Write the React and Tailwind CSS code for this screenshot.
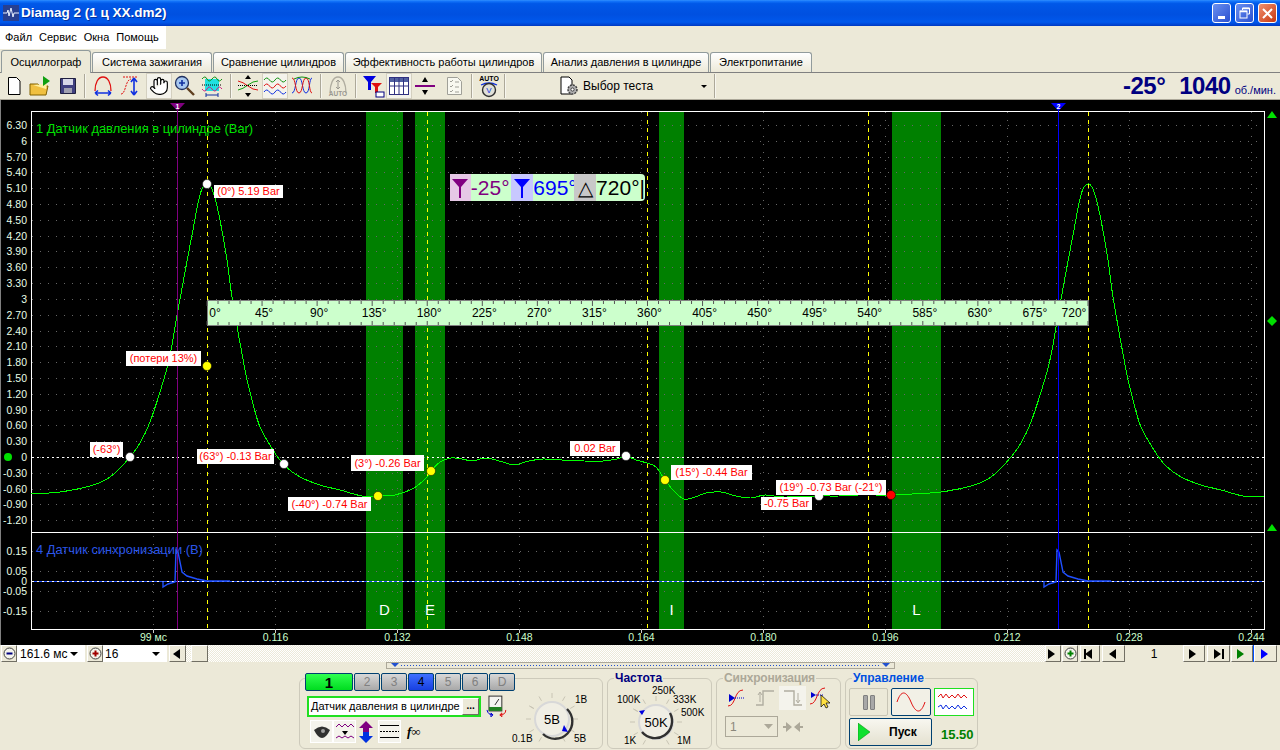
import { Hand } from 'lucide-react';

const raised = 'bg-[#ece9d8] border border-t-white border-l-white border-r-[#716f64] border-b-[#716f64]';

const tabs = [
  { label: 'Система зажигания', width: 'w-[120px]' },
  { label: 'Сравнение цилиндров', width: 'w-[131px]' },
  { label: 'Эффективность работы цилиндров', width: 'w-[197px]' },
  { label: 'Анализ давления в цилиндре', width: 'w-[166px]' },
  { label: 'Электропитание', width: 'w-[102px]' },
];

const axisTop = ['6.30', '6', '5.70', '5.40', '5.10', '4.80', '4.50', '4.20', '3.90', '3.60', '3.30', '3', '2.70', '2.40', '2.10', '1.80', '1.50', '1.20', '0.90', '0.60', '0.30', '0', '-0.30', '-0.60', '-0.90', '-1.20'];
const axisSync = [['0.15', 551], ['0.05', 571], ['0', 581], ['-0.05', 591], ['-0.15', 611]];
const times = ['99 мс', '0.116', '0.132', '0.148', '0.164', '0.180', '0.196', '0.212', '0.228', '0.244'];

const peak = [[31, 494], [60, 492], [90, 486], [107, 479], [118, 470], [130, 457], [140, 443], [150, 422], [160, 392], [167, 368], [172, 345], [178, 310], [185, 272], [192, 235], [198, 203], [202, 189], [207, 184], [211, 187], [215, 198], [220, 220], [227, 260], [232, 297], [245, 370], [252, 400], [260, 427], [273, 450], [284, 465], [300, 477], [320, 485], [340, 490], [362, 496]];
const middle = [[378, 496], [395, 495], [414, 488], [427, 477], [431, 471], [440, 462], [451, 458], [462, 459], [473, 461], [486, 458], [503, 462], [514, 465], [529, 461], [543, 459], [562, 460], [584, 461], [603, 461], [617, 459], [626, 456], [636, 460], [647, 463], [656, 467], [665, 480], [673, 490], [684, 499], [695, 497], [706, 493], [721, 492], [736, 496], [751, 498], [765, 495], [784, 497], [819, 496], [839, 496], [858, 495], [891, 495]];
const greenPoints = [...peak, ...middle, ...peak.map(([x, y]) => [x + 881, y]), [1264, 497]];

// catmull-rom through the read-off points so the trace doesn't look kinked
function smooth(pts) {
  let d = `M${pts[0][0]} ${pts[0][1]}`;
  for (let i = 0; i < pts.length - 1; i++) {
    const a = pts[Math.max(i - 1, 0)];
    const b = pts[i];
    const c = pts[i + 1];
    const e = pts[Math.min(i + 2, pts.length - 1)];
    const c1 = [b[0] + (c[0] - a[0]) / 6, b[1] + (c[1] - a[1]) / 6];
    const c2 = [c[0] - (e[0] - b[0]) / 6, c[1] - (e[1] - b[1]) / 6];
    d += `C${c1[0].toFixed(1)} ${c1[1].toFixed(1)} ${c2[0].toFixed(1)} ${c2[1].toFixed(1)} ${c[0]} ${c[1]}`;
  }
  return d;
}
const greenTrace = smooth(greenPoints);

const pulse = [[163, 581], [163, 587], [168, 584], [175, 582], [176, 550], [178, 552], [182, 572], [187, 576], [197, 579], [207, 581], [230, 581]];
const pulseA = pulse.map(p => p.join(',')).join(' ');
const pulseB = pulse.map(([x, y]) => `${x + 881},${y}`).join(' ');

const bands = [
  { x: 366, w: 37, label: 'D' },
  { x: 415, w: 30, label: 'E' },
  { x: 659, w: 25, label: 'I' },
  { x: 892, w: 49, label: 'L' },
];

const markers = [
  [207, 184, '#ffffff'], [207, 366, '#ffff00'], [130, 457, '#ffffff'], [284, 464, '#ffffff'], [378, 496, '#ffff00'],
  [431, 471, '#ffff00'], [626, 456, '#ffffff'], [665, 480, '#ffff00'], [819, 496, '#ffffff'], [891, 495, '#ff0000'],
];

const notes = [
  { text: '(0°) 5.19 Bar', x: 214, y: 185, w: 69, h: 13 },
  { text: '(потери 13%)', x: 126, y: 351, w: 75, h: 15 },
  { text: '(-63°)', x: 90, y: 442, w: 33, h: 15 },
  { text: '(63°) -0.13 Bar', x: 197, y: 449, w: 77, h: 15 },
  { text: '(-40°) -0.74 Bar', x: 288, y: 497, w: 83, h: 14 },
  { text: '(3°) -0.26 Bar', x: 351, y: 455, w: 73, h: 16 },
  { text: '0.02 Bar', x: 570, y: 441, w: 50, h: 15 },
  { text: '(15°) -0.44 Bar', x: 671, y: 465, w: 81, h: 15 },
  { text: '(19°) -0.73 Bar (-21°)', x: 776, y: 480, w: 110, h: 15 },
  { text: '-0.75 Bar', x: 761, y: 497, w: 51, h: 13 },
];

const rulerTicks = Array.from({ length: 81 }, (_, i) => i * 9);
const rulerLabels = Array.from({ length: 17 }, (_, i) => i * 45);
const degX = d => 207 + d * 1.2236;

function Funnel({ color }) {
  return (
    <svg width="16" height="22" viewBox="0 0 16 22">
      <path d="M0 2h16l-7 8v11h-2v-11z" fill={color} />
    </svg>
  );
}

function Scope() {
  return (
    <div className="relative h-[545px] bg-black border-l border-[#808080]">
      <svg className="absolute left-[-1px] top-0" width="1280" height="545" viewBox="0 100 1280 545">
        {bands.map(b => (
          <rect key={b.label} x={b.x} y="112" width={b.w} height="517" fill="#008000" />
        ))}
        <g stroke="#666" strokeDasharray="1 7" shapeRendering="crispEdges">
          {axisTop.map((_, i) => (
            <line key={i} x1="32" x2="1264" y1={Math.round(125 + i * 15.81)} y2={Math.round(125 + i * 15.81)} />
          ))}
          {[551, 571, 591, 611].map(y => (
            <line key={y} x1="32" x2="1264" y1={y} y2={y} />
          ))}
          {times.map((_, i) => (
            <line key={i} x1={153.5 + i * 122} x2={153.5 + i * 122} y1="112" y2="629" />
          ))}
        </g>
        <g stroke="#ffff00" strokeDasharray="4 4" shapeRendering="crispEdges">
          {[207, 427, 647, 868, 1088].map(x => (
            <line key={x} x1={x + 0.5} x2={x + 0.5} y1="112" y2="629" />
          ))}
        </g>
        <rect x="31.5" y="111.5" width="1233" height="518" fill="none" stroke="#fff" />
        <line x1="31" x2="1265" y1="532.5" y2="532.5" stroke="#fff" />
        <line x1="32" x2="1264" y1="457.5" y2="457.5" stroke="#fff" strokeDasharray="2 3" />
        <line x1="32" x2="1264" y1="581.5" y2="581.5" stroke="#2050ff" />
        <line x1="32" x2="1264" y1="581.5" y2="581.5" stroke="#fff" strokeDasharray="2 3" />
        <path d={greenTrace} fill="none" stroke="#00ff00" shapeRendering="crispEdges" />
        <polyline points={pulseA} fill="none" stroke="#2050ff" strokeWidth="1.4" />
        <polyline points={pulseB} fill="none" stroke="#2050ff" strokeWidth="1.4" />
        <line x1="177.5" x2="177.5" y1="105" y2="629" stroke="#800080" />
        <line x1="1058.5" x2="1058.5" y1="105" y2="629" stroke="#0000ff" />
        <polygon points="170,103 185,103 177.5,111" fill="#800080" />
        <polygon points="1051,103 1066,103 1058.5,111" fill="#0000ff" />
        <text x="177.5" y="109" textAnchor="middle" fontSize="7" fontWeight="700" fill="#fff">1</text>
        <text x="1058.5" y="109" textAnchor="middle" fontSize="7" fontWeight="700" fill="#fff">2</text>
        <g fontSize="10.5" fill="#e8ffe8" textAnchor="end">
          {axisTop.map((v, i) => (
            <text key={v} x="27" y={129 + i * 15.81}>{v}</text>
          ))}
          {axisSync.map(([v, y]) => (
            <text key={v} x="27" y={y + 4}>{v}</text>
          ))}
        </g>
        <g fontSize="10.5" fill="#ccffcc" textAnchor="middle">
          {times.map((t, i) => (
            <text key={t} x={153.5 + i * 122} y="641">{t}</text>
          ))}
        </g>
        <g stroke="#ccc">
          {times.map((_, i) => (
            <line key={i} x1={153.5 + i * 122} x2={153.5 + i * 122} y1="629" y2="633" />
          ))}
        </g>
        <text x="36" y="133" fontSize="12.9" fill="#00e000">1 Датчик давления в цилиндре (Bar)</text>
        <text x="36" y="554" fontSize="12.9" fill="#2a55e8">4 Датчик синхронизации (В)</text>
        <g fontSize="15" fill="#fff" textAnchor="middle">
          {bands.map(b => (
            <text key={b.label} x={b.x + b.w / 2} y="615">{b.label}</text>
          ))}
        </g>
        <rect x="207.5" y="300.5" width="881" height="25" fill="#ccffcc" stroke="#808080" />
        <g stroke="#555">
          {rulerTicks.map(d => (
            <g key={d}>
              <line x1={degX(d)} x2={degX(d)} y1="301" y2={d % 45 === 0 ? 306 : 304} />
              <line x1={degX(d)} x2={degX(d)} y1={d % 45 === 0 ? 321 : 322} y2="325" />
            </g>
          ))}
        </g>
        <g fontSize="12" fill="#000" textAnchor="middle">
          {rulerLabels.map(d => (
            <text key={d} x={d === 0 ? 215 : d === 720 ? 1074 : degX(d) + 2} y="317">{d}°</text>
          ))}
        </g>
        {markers.map(([x, y, c], i) => (
          <circle key={i} cx={x} cy={y} r="4.5" fill={c} stroke="#000" strokeWidth="0.5" />
        ))}
        <circle cx="8" cy="457" r="4" fill="#00e000" />
        <polygon points="1272,111 1277,118 1267,118" fill="#00e000" />
        <polygon points="1272,316 1277,321 1272,326 1267,321" fill="#00e000" />
        <polygon points="1272,524 1277,531 1267,531" fill="#00e000" />
      </svg>

      {notes.map(n => (
        <div
          key={n.text}
          className="absolute bg-white text-[#ff0000] text-[11px] leading-none flex items-center justify-center whitespace-nowrap"
          style={{ left: n.x - 1, top: n.y - 100, width: n.w, height: n.h }}
        >
          {n.text}
        </div>
      ))}

      <div className="absolute left-[449px] top-[74px] h-[27px] w-[195px] flex text-[21px] leading-none bg-[#ccffcc] rounded-r-sm">
        <div className="w-[21px] bg-[#e6c8e6] flex items-center justify-center"><Funnel color="#800080" /></div>
        <div className="w-[41px] text-[#800080] flex items-center">-25°</div>
        <div className="w-[22px] bg-[#c8c8ff] flex items-center justify-center"><Funnel color="#0000ff" /></div>
        <div className="w-[41px] text-[#0000ff] flex items-center whitespace-nowrap">695°</div>
        <div className="w-[22px] bg-[#c8c8c8] flex items-center justify-center text-[#000] text-[20px]">△</div>
        <div className="flex-1 text-black flex items-center whitespace-nowrap">720°|</div>
      </div>
    </div>
  );
}

function ToolIcon({ children, pressed, width = 'w-[26px]' }) {
  return (
    <div className={`${width} h-[26px] flex items-center justify-center shrink-0 ${pressed ? 'bg-[#f4f3ec] border border-[#d4d0c0]' : ''}`}>
      {children}
    </div>
  );
}

function Sep({ ml }) {
  return <div className={`h-[24px] w-[2px] border-l border-[#aca899] bg-white/60 shrink-0 ${ml}`} />;
}

function Waves({ colors }) {
  return (
    <svg width="24" height="20" viewBox="0 0 24 20" fill="none">
      {colors.map((c, i) => (
        <path key={c} d={`M1 ${4 + i * 6}q2.7-4 5.5 0t5.5 0 5.5 0 5.5 0`} stroke={c} />
      ))}
    </svg>
  );
}

function Toolbar() {
  return (
    <div className="h-[28px] flex items-center border-t border-[#808080] border-b border-b-[#aca899] bg-[#ece9d8] text-[12px] text-black">
      <div className="w-[1px] shrink-0" />
      <ToolIcon>
        <svg width="16" height="18" viewBox="0 0 16 18"><path d="M2.5.5h8l3.5 3.5v13.5h-11.5z" fill="#fff" stroke="#000" /></svg>
      </ToolIcon>
      <ToolIcon>
        <svg width="22" height="22" viewBox="0 0 22 22">
          <path d="M1 9h8l2 2h8l-2 9h-16z" fill="#f0c040" stroke="#806000" />
          <path d="M4 10l14-1-1 5z" fill="#fff0a0" />
          <path d="M14 1l7 5-7 5z" fill="#10a010" />
        </svg>
      </ToolIcon>
      <div className="w-[2px] shrink-0" />
      <ToolIcon>
        <svg width="16" height="16" viewBox="0 0 16 16">
          <path d="M.5.5h15v15h-15z" fill="#404080" stroke="#202040" />
          <rect x="3" y="1" width="10" height="6" fill="#d8d8e8" />
          <rect x="4" y="10" width="8" height="5" fill="#a0a0b0" />
        </svg>
      </ToolIcon>
      <Sep ml="ml-[3px]" />
      <div className="w-[4px] shrink-0" />
      <ToolIcon>
        <svg width="22" height="22" viewBox="0 0 22 22" fill="none">
          <path d="M3 16c0-8 3-14 8-14s8 6 8 14" stroke="#e01010" strokeWidth="1.3" />
          <path d="M3 18h16M3 18l3-2.5M3 18l3 2.5M19 18l-3-2.5M19 18l-3 2.5" stroke="#1030e0" strokeWidth="1.6" />
        </svg>
      </ToolIcon>
      <div className="w-[1px] shrink-0" />
      <ToolIcon>
        <svg width="22" height="22" viewBox="0 0 22 22" fill="none">
          <path d="M2 19c5 0 4-14 10-15M4 2h14" stroke="#e01010" strokeDasharray="2 1" />
          <path d="M15 3v17M15 3l-3 4M15 3l3 4M15 20l-3-4M15 20l3-4" stroke="#1030e0" strokeWidth="1.6" />
        </svg>
      </ToolIcon>
      <div className="w-[3px] shrink-0" />
      <ToolIcon pressed>
        <Hand size={20} strokeWidth={1.4} color="#000" fill="#fff" />
      </ToolIcon>
      <ToolIcon>
        <svg width="22" height="22" viewBox="0 0 22 22" fill="none">
          <circle cx="8" cy="8" r="6.5" fill="#a8c8f0" stroke="#203060" strokeWidth="1.3" />
          <path d="M5 8h6M8 5v6" stroke="#1030a0" strokeWidth="1.6" />
          <path d="M13 13l7 7" stroke="#604020" strokeWidth="2.4" />
        </svg>
      </ToolIcon>
      <div className="w-[1px] shrink-0" />
      <ToolIcon>
        <svg width="22" height="22" viewBox="0 0 22 22" fill="none">
          <rect x="4" y="4" width="14" height="12" fill="#20e0e0" />
          <path d="M1 4q3-4 5 0t5 0 5 0 5 0" stroke="#109010" />
          <path d="M1 10h20" stroke="#000" strokeDasharray="1 1" />
          <path d="M1 14q3 4 5 0t5 0 5 0 5 0" stroke="#d02080" />
          <path d="M5 20h12M5 18v4M17 18v4" stroke="#1030a0" />
        </svg>
      </ToolIcon>
      <Sep ml="ml-[5px]" />
      <div className="w-[3px] shrink-0" />
      <ToolIcon>
        <svg width="22" height="22" viewBox="0 0 22 22" fill="none">
          <path d="M1 15q5-1 10-5t10-4" stroke="#10a010" />
          <path d="M1 6q5 1 10 5t10 4" stroke="#e01010" />
          <path d="M1 10.5h20" stroke="#000" strokeDasharray="1 1" />
          <path d="M11 0l-3 4h6zM11 22l-3-4h6z" fill="#000" />
        </svg>
      </ToolIcon>
      <div className="w-[1px] shrink-0" />
      <ToolIcon pressed>
        <Waves colors={['#109010', '#e01010', '#1030e0']} />
      </ToolIcon>
      <div className="w-[1px] shrink-0" />
      <ToolIcon>
        <svg width="22" height="22" viewBox="0 0 22 22" fill="none">
          <path d="M1 18c4 0 3-15 7-15s3 15 7 15 3-15 6-15" stroke="#1030e0" />
          <path d="M1 3c4 0 3 15 7 15s3-15 7-15 3 15 6 15" stroke="#e01010" />
          <path d="M3 4q8-4 16 0" stroke="#109010" />
        </svg>
      </ToolIcon>
      <Sep ml="ml-[5px]" />
      <div className="w-[3px] shrink-0" />
      <ToolIcon>
        <svg width="20" height="22" viewBox="0 0 20 22" fill="none">
          <path d="M2 18c0-9 3-16 8-16s8 7 8 16" stroke="#b0ada0" strokeWidth="1.3" />
          <path d="M10 5v9M8 7l2-2 2 2M8 12l2 2 2-2" stroke="#9a9890" />
          <text x="10" y="21" textAnchor="middle" fontSize="6.5" fontWeight="700" fill="#9a9890" stroke="none">AUTO</text>
        </svg>
      </ToolIcon>
      <Sep ml="ml-[4px]" />
      <div className="w-[3px] shrink-0" />
      <ToolIcon>
        <svg width="24" height="24" viewBox="0 0 24 24" fill="none">
          <path d="M2 2h13l-5 6v8h-3v-8z" fill="#0000e0" />
          <path d="M10 9h11l-4 4v6h-3v-6z" fill="#e01010" />
          <rect x="15" y="18" width="8" height="5" fill="#fff" stroke="#000080" />
        </svg>
      </ToolIcon>
      <ToolIcon pressed>
        <svg width="20" height="18" viewBox="0 0 20 18" fill="none">
          <rect x=".5" y=".5" width="19" height="17" fill="#fff" stroke="#303080" />
          <rect x="1" y="1" width="18" height="4" fill="#5060a0" />
          <path d="M5.5 1v16M10 1v16M14.5 1v16M1 9h18" stroke="#303080" />
        </svg>
      </ToolIcon>
      <ToolIcon>
        <svg width="20" height="18" viewBox="0 0 20 18">
          <path d="M10 0l-3 5h6zM10 18l-3-5h6z" fill="#000" />
          <rect x="0" y="8" width="20" height="2" fill="#800080" />
        </svg>
      </ToolIcon>
      <div className="w-[3px] shrink-0" />
      <ToolIcon>
        <svg width="15" height="18" viewBox="0 0 15 18" fill="none">
          <path d="M.5.5h10l4 4v13h-14z" fill="#f8f8f0" stroke="#a0a098" />
          <path d="M3 4l1 1 2-2M3 9l1 1 2-2M3 14l1 1 2-2M8 5h4M8 10h4M8 15h4" stroke="#a0a098" />
        </svg>
      </ToolIcon>
      <Sep ml="ml-[4px]" />
      <div className="w-[3px] shrink-0" />
      <ToolIcon>
        <svg width="20" height="23" viewBox="0 0 20 23" fill="none">
          <text x="10" y="6" textAnchor="middle" fontSize="7" fontWeight="700" fill="#000" stroke="none">AUTO</text>
          <path d="M2 10q8-4 16 0M2 10l3-1M18 10l-3-1" stroke="#1030e0" strokeWidth="1.3" />
          <circle cx="10" cy="15" r="6.5" fill="#e0e0d8" stroke="#303030" strokeWidth="1.4" />
          <text x="10" y="18" textAnchor="middle" fontSize="8" fill="#1030e0" stroke="none">V</text>
        </svg>
      </ToolIcon>
      <Sep ml="ml-[2px]" />
      <div className="ml-[53px] w-[148px] flex items-center gap-[4px] shrink-0">
        <svg width="20" height="20" viewBox="0 0 20 20" fill="none">
          <path d="M2 1h8l3 3v14h-11z" fill="#fff" stroke="#000" />
          <circle cx="13.5" cy="13.5" r="4.5" fill="#b0b0b0" stroke="#404040" strokeWidth="1.5" strokeDasharray="2 1" />
          <circle cx="13.5" cy="13.5" r="1.6" fill="#fff" stroke="#404040" />
        </svg>
        <span className="leading-none flex-1 whitespace-nowrap">Выбор теста</span>
        <svg width="6" height="3" viewBox="0 0 6 3"><path d="M0 0h6l-3 3z" fill="#000" /></svg>
      </div>
      <Sep ml="ml-[7px]" />
      <div className="ml-auto flex items-baseline pr-[4px] text-[#000080] font-bold leading-none">
        <span className="text-[24px] tracking-[-0.5px]">-25°</span>
        <span className="text-[24px] ml-[14px] tracking-[-0.5px]">1040</span>
        <span className="text-[11px] font-normal ml-[4px]">об./мин.</span>
      </div>
    </div>
  );
}

function Tri({ dir = 'right', color = '#000', bar }) {
  const d = dir === 'right' ? 'M1 0l7 5-7 5z' : 'M8 0l-7 5 7 5z';
  return (
    <svg width="12" height="10" viewBox="0 0 12 10">
      <path d={d} fill={color} />
      {bar === 'left' && <rect x="0" width="2" height="10" fill={color} />}
      {bar === 'right' && <rect x="9" width="2" height="10" fill={color} />}
    </svg>
  );
}

function NavBtn({ width, children }) {
  return <div className={`${raised} ${width} h-[17px] flex items-center justify-center shrink-0`}>{children}</div>;
}

function RoundBtn({ sign, color }) {
  return (
    <div className={`${raised} w-[16px] h-[17px] flex items-center justify-center shrink-0`}>
      <svg width="13" height="13" viewBox="0 0 13 13" fill="none">
        <circle cx="6.5" cy="6.5" r="5.5" stroke="#404040" fill="#f4f4ec" />
        <path d={sign === '+' ? 'M3.5 6.5h6M6.5 3.5v6' : 'M3.5 6.5h6'} stroke={color} strokeWidth="2" />
      </svg>
    </div>
  );
}

function ScrollRow() {
  return (
    <div className="h-[17px] flex pl-[1px] bg-[#ece9d8] text-[12px] leading-none text-black">
      <RoundBtn sign="-" color="#000080" />
      <div className="w-[68px] bg-white flex items-center justify-between pl-[3px] pr-[7px] shrink-0">
        <span>161.6 мс</span>
        <svg width="8" height="4" viewBox="0 0 8 4"><path d="M0 0h8l-4 4z" fill="#000" /></svg>
      </div>
      <div className="w-[2px] shrink-0" />
      <RoundBtn sign="+" color="#a00000" />
      <div className="w-[64px] bg-white flex items-center justify-between pl-[2px] pr-[7px] shrink-0">
        <span>16</span>
        <svg width="8" height="4" viewBox="0 0 8 4"><path d="M0 0h8l-4 4z" fill="#000" /></svg>
      </div>
      <div className="w-[2px] shrink-0" />
      <NavBtn width="w-[17px]"><Tri dir="left" /></NavBtn>
      <div className="flex-1 flex bg-[repeating-conic-gradient(#ffffff_0%_25%,#ece9d8_0%_50%)] bg-size-[2px_2px]">
        <div className="w-[5px]" />
        <div className={`${raised} w-[17px] h-[17px]`} />
      </div>
      <NavBtn width="w-[16px]"><Tri /></NavBtn>
      <div className="w-[1px] shrink-0" />
      <RoundBtn sign="+" color="#008000" />
      <div className="w-[2px] shrink-0" />
      <NavBtn width="w-[20px]"><Tri dir="left" bar="left" /></NavBtn>
      <div className="w-[2px] shrink-0" />
      <NavBtn width="w-[23px]"><Tri dir="left" /></NavBtn>
      <div className="w-[58px] flex items-center justify-center shrink-0">1</div>
      <NavBtn width="w-[22px]"><Tri /></NavBtn>
      <div className="w-[2px] shrink-0" />
      <NavBtn width="w-[23px]"><Tri bar="right" /></NavBtn>
      <div className="w-[1px] shrink-0" />
      <NavBtn width="w-[22px]"><Tri color="#008000" /></NavBtn>
      <div className="w-[1px] bg-[#0050ff] shrink-0" />
      <NavBtn width="w-[23px]"><Tri color="#0000ff" /></NavBtn>
      <div className="w-[3px] shrink-0" />
    </div>
  );
}

function Knob({ center, hand, dark, ticks, labels, width, height, cx, cy }) {
  return (
    <svg width={width} height={height} viewBox={`0 0 ${width} ${height}`} fill="none" className="shrink-0">
      {ticks.map(a => {
        const r = (a * Math.PI) / 180;
        return (
          <line
            key={a}
            x1={cx + Math.cos(r) * 21}
            y1={cy + Math.sin(r) * 21}
            x2={cx + Math.cos(r) * 26}
            y2={cy + Math.sin(r) * 26}
            stroke="#c8c4b4"
          />
        );
      })}
      <circle cx={cx} cy={cy} r="17" stroke="#d8d8d8" strokeWidth="2" fill="#f0eee4" />
      <path d={dark} stroke="#303030" strokeWidth="2.4" />
      <path d={hand} fill="#0000e0" />
      <text x={cx} y={cy + 5} textAnchor="middle" fontSize="13" fill="#000">{center}</text>
      {labels.map(l => (
        <text key={l.t} x={l.x} y={l.y} fontSize="10" fill="#000">{l.t}</text>
      ))}
    </svg>
  );
}

function GroupBox({ width, title, titleColor, children }) {
  return (
    <div className={`relative ${width} h-[71px] border border-[#cdcabb] rounded-md shrink-0`}>
      {title && (
        <span className={`absolute left-[6px] top-[-7px] px-[1px] bg-[#ece9d8] text-[12px] font-bold leading-none whitespace-nowrap ${titleColor}`}>
          {title}
        </span>
      )}
      {children}
    </div>
  );
}

function ChannelBtn({ label, className }) {
  return (
    <div className={`h-[18px] border border-[#004070] flex items-center justify-center text-[12px] font-bold leading-none rounded-[2px] shrink-0 ${className}`}>
      {label}
    </div>
  );
}

const channelOff = 'w-[26px] bg-[linear-gradient(#d8d8d8,#a8a8a8)] text-[#808080] font-normal';

function BottomPanel() {
  return (
    <div className="flex-1 flex pl-[299px] pt-[9px] gap-[4px] bg-[#ece9d8] text-black">
      <GroupBox width="w-[304px]">
        <div className="mt-[-6px] ml-[5px] flex gap-[1px]">
          <ChannelBtn label="1" className="w-[48px] bg-[linear-gradient(#30ff50,#00dc20)] text-[15px]" />
          <ChannelBtn label="2" className={channelOff} />
          <ChannelBtn label="3" className={channelOff} />
          <ChannelBtn label="4" className="w-[26px] bg-[linear-gradient(#4070ff,#1840e0)] text-[#000] font-normal" />
          <ChannelBtn label="5" className={channelOff} />
          <ChannelBtn label="6" className={channelOff} />
          <ChannelBtn label="D" className={channelOff} />
        </div>
        <div className="flex mt-[-1px]">
          <div className="w-[208px] pl-[7px] pt-[5px] shrink-0">
            <div className="flex items-center gap-[2px]">
              <div className="w-[176px] h-[21px] border-2 border-[#20e020] bg-white flex items-center justify-between pl-[2px] text-[11px] leading-none">
                <span className="whitespace-nowrap">Датчик давления в цилиндре</span>
                <div className={`${raised} w-[17px] h-[17px] text-[10px] font-bold flex items-center justify-center`}>...</div>
              </div>
              <svg width="22" height="22" viewBox="0 0 22 22" fill="none" className="ml-[3px]">
                <rect x="3" y="1" width="13" height="15" fill="#f4f4f0" stroke="#303030" />
                <rect x="3" y="12" width="13" height="4" fill="#208020" />
                <path d="M9 10l4-6" stroke="#303030" />
                <path d="M1 15q1 5 6 5M7 20l-2-2v4z" stroke="#0000d0" />
                <path d="M20 15q0 5-6 5M14 20l2-2v4z" stroke="#e01010" />
              </svg>
            </div>
            <div className="flex items-center mt-[3px] pl-[3px] h-[23px]">
              <div className="w-[23px] h-[23px] bg-[#f4f3ec] border border-white flex items-center justify-center shrink-0">
                <svg width="16" height="12" viewBox="0 0 16 12"><path d="M0 4q8-7 16 0-4 8-8 8t-8-8z" fill="#303030" /><circle cx="9" cy="5" r="2" fill="#a0a0a0" /></svg>
              </div>
              <div className="w-[23px] h-[23px] bg-[#f4f3ec] border border-white flex items-center justify-center shrink-0">
                <svg width="20" height="20" viewBox="0 0 20 20" fill="none">
                  <path d="M1 5l3-3 3 3 3-3 3 3 3-3 3 3M1 16l3-2 3 2 3-2 3 2 3-2 3 2" stroke="#800080" />
                  <path d="M7 9h6l-3 4z" fill="#000" />
                </svg>
              </div>
              <svg width="18" height="22" viewBox="0 0 18 22" className="ml-[1px] shrink-0">
                <path d="M9 0l7 7h-4v5h-6v-5h-4z" fill="#800080" />
                <path d="M9 22l7-7h-4v-4h-6v4h-4z" fill="#0030e0" />
              </svg>
              <div className="w-[23px] h-[23px] ml-[3px] bg-[#f4f3ec] border border-white flex items-center justify-center shrink-0">
                <svg width="19" height="15" viewBox="0 0 19 15" fill="none">
                  <path d="M0 1.5h19M0 13.5h19" stroke="#000" />
                  <path d="M0 7.5h19" stroke="#000" strokeDasharray="2 1" />
                </svg>
              </div>
              <span className="ml-[6px] font-['Liberation_Serif',serif] italic font-bold text-[13px] leading-none">f∞</span>
            </div>
          </div>
          <div className="ml-[-5px]">
            <Knob
              width={97}
              height={56}
              cx={49}
              cy={29}
              center="5В"
              dark="M64 19A17 17 0 0 1 40 44"
              hand="M59 41l6 1-4-7z"
              ticks={[-150, -120, -90, -60, -30, 0, 30, 60, 120, 150, 180, 210]}
              labels={[
                { t: '1В', x: 72, y: 13 },
                { t: '0.1В', x: 9, y: 52 },
                { t: '5В', x: 71, y: 52 },
              ]}
            />
          </div>
        </div>
      </GroupBox>

      <GroupBox width="w-[105px]" title="Частота" titleColor="text-[#000080]">
        <Knob
          width={103}
          height={69}
          cx={48}
          cy={43}
          center="50K"
          dark="M62 34A17 17 0 0 1 34 53"
          hand="M31 32l6-1-3 5z"
          ticks={[-150, -120, -90, -60, -30, 0, 30, 60, 120, 150, 180, 210]}
          labels={[
            { t: '250K', x: 44, y: 15 },
            { t: '100K', x: 9, y: 24 },
            { t: '333K', x: 65, y: 24 },
            { t: '500K', x: 73, y: 37 },
            { t: '1K', x: 16, y: 65 },
            { t: '1M', x: 69, y: 65 },
          ]}
        />
      </GroupBox>

      <GroupBox width="w-[125px]" title="Синхронизация" titleColor="text-[#aca899] tracking-[-0.2px]">
        <div className="flex items-center gap-[1px] pl-[6px] pt-[7px]">
          <div className="w-[27px] h-[22px] flex items-center justify-center">
            <svg width="20" height="20" viewBox="0 0 20 20" fill="none"><path d="M1 18c8 0 6-16 15-16" stroke="#e01010" /><path d="M2 6l6 4-6 4z" fill="#0000d0" /><path d="M8 10h10" stroke="#0000d0" strokeDasharray="1 1" /></svg>
          </div>
          <div className="w-[27px] h-[22px] flex items-center justify-center">
            <svg width="20" height="18" viewBox="0 0 20 18" fill="none"><path d="M1 16h7v-14h11" stroke="#b0ada0" strokeWidth="1.4" /><path d="M5 4v9M3 6l2-3 2 3" stroke="#b0ada0" /></svg>
          </div>
          <div className="w-[27px] h-[24px] flex items-center justify-center bg-[#f4f3ec]">
            <svg width="20" height="18" viewBox="0 0 20 18" fill="none"><path d="M1 2h10v14h8" stroke="#b0ada0" strokeWidth="1.4" /><path d="M15 4v9M13 11l2 3 2-3" stroke="#b0ada0" /></svg>
          </div>
          <div className="w-[27px] h-[22px] flex items-center justify-center">
            <svg width="24" height="22" viewBox="0 0 24 22" fill="none">
              <path d="M1 17c8 0 6-16 15-16" stroke="#e01010" />
              <path d="M2 5l5 3-5 3z" fill="#0000d0" />
              <path d="M7 8h8" stroke="#0000d0" strokeDasharray="1 1" />
              <path d="M12 8v12l3-3 2 4 2-1-2-4h4z" fill="#ffe040" stroke="#000" strokeWidth="0.7" />
            </svg>
          </div>
        </div>
        <div className="flex items-center pl-[8px] pt-[6px]">
          <div className="w-[53px] h-[21px] border border-[#aca899] flex items-center justify-between px-[4px] text-[12px] text-[#8a877a] leading-none">
            <span>1</span>
            <svg width="9" height="5" viewBox="0 0 9 5"><path d="M0 0h9l-4.500 5z" fill="#aca899" /></svg>
          </div>
          <svg width="20" height="10" viewBox="0 0 20 10" className="ml-[5px]"><path d="M0 5h4M20 5h-4" stroke="#aca899" strokeWidth="2" /><path d="M3 0l6 5-6 5zM17 0l-6 5 6 5z" fill="#aca899" /></svg>
        </div>
      </GroupBox>

      <GroupBox width="w-[133px]" title="Управление" titleColor="text-[#0050e0]">
        <div className="flex gap-[3px] pl-[3px] pt-[9px]">
          <div className="w-[39px] h-[28px] border border-[#c8c5b5] rounded-[2px] flex items-center justify-center gap-[2px]">
            <div className="w-[5px] h-[15px] bg-[#a8a8a8] border border-[#808080] rounded-[1px]" />
            <div className="w-[5px] h-[15px] bg-[#a8a8a8] border border-[#808080] rounded-[1px]" />
          </div>
          <div className="w-[40px] h-[28px] border border-[#004070] rounded-[2px] bg-[#f2f0e6] flex items-center justify-center">
            <svg width="30" height="20" viewBox="0 0 30 20" fill="none"><path d="M1 10c4-12 9-12 14 0s10 12 14 0" stroke="#e01010" /></svg>
          </div>
          <div className="w-[40px] h-[28px] border border-[#20e020] bg-white flex items-center justify-center">
            <svg width="34" height="20" viewBox="0 0 34 20" fill="none">
              <path d="M1 5l3-3 2 4 3-4 3 4 3-3 3 3 3-4 3 4 3-3 3 3" stroke="#e01010" />
              <path d="M1 15l3-2 2 4 3-4 3 4 3-3 3 3 3-4 3 4 3-3 3 3" stroke="#1030e0" />
            </svg>
          </div>
        </div>
        <div className="flex items-center pl-[3px] pt-[2px]">
          <div className="w-[83px] h-[28px] border border-[#004070] rounded-[2px] bg-[linear-gradient(#f8f7f0,#e4e1d0)] flex items-center">
            <svg width="12" height="18" viewBox="0 0 12 18" className="ml-[8px]"><path d="M0 0l12 9-12 9z" fill="#10e030" stroke="#008000" strokeWidth="0.5" /></svg>
            <span className="ml-[19px] text-[12px] font-bold leading-none">Пуск</span>
          </div>
          <span className="ml-[9px] mt-[5px] text-[13px] font-bold text-[#008000] leading-none">15.50</span>
        </div>
      </GroupBox>
    </div>
  );
}

function WinBtn({ className, children }) {
  return (
    <div className={`w-[19px] h-[20px] border border-white rounded-[3px] flex items-center justify-center shrink-0 ${className}`}>
      {children}
    </div>
  );
}

export default function App() {
  return (
    <div className="w-[1280px] h-[750px] overflow-hidden flex flex-col bg-[#ece9d8] font-['Liberation_Sans',Arial,sans-serif]">
      <div className="h-[26px] flex items-center pl-[3px] pr-[3px] bg-[linear-gradient(180deg,#2f8fff_0%,#1070f8_6%,#0058e8_14%,#0050e0_55%,#0058ec_85%,#0046d4_94%,#0038c0_100%)]">
        <svg width="16" height="16" viewBox="0 0 16 16" className="shrink-0" fill="none">
          <rect width="16" height="16" fill="#284090" />
          <path d="M0 8h4l1-3 1 6 2-8 2 9 1-4h5" stroke="#e8f0ff" />
        </svg>
        <span className="ml-[2px] text-white text-[13.5px] font-bold leading-none [text-shadow:1px_1px_0_#0030a0] whitespace-nowrap">Diamag 2 (1 ц XX.dm2)</span>
        <div className="ml-auto flex gap-[4px]">
          <WinBtn className="bg-[linear-gradient(135deg,#6a90f0,#2a50d0)]">
            <div className="w-[7px] h-[3px] bg-white mt-[9px] mr-[1px]" />
          </WinBtn>
          <WinBtn className="bg-[linear-gradient(135deg,#6a90f0,#2a50d0)]">
            <svg width="12" height="12" viewBox="0 0 12 12" fill="none"><path d="M3.500 3V1h7v6h-2" stroke="#fff" /><rect x="1" y="4" width="7" height="7" stroke="#fff" /><path d="M1 4.500h7M3.500 1.500h7" stroke="#fff" strokeWidth="1.400" /></svg>
          </WinBtn>
          <WinBtn className="bg-[linear-gradient(135deg,#f09070,#c83810)]">
            <svg width="11" height="11" viewBox="0 0 11 11"><path d="M1 1l9 9M10 1l-9 9" stroke="#fff" strokeWidth="2" /></svg>
          </WinBtn>
        </div>
      </div>

      <div className="h-[23px] flex">
        <div className="w-[166px] bg-white flex items-center gap-[7px] pl-[5px] text-[11px] leading-none text-black whitespace-nowrap">
          <span>Файл</span>
          <span>Сервис</span>
          <span>Окна</span>
          <span>Помощь</span>
        </div>
      </div>

      <div className="h-[23px] flex items-end pl-[1px] gap-[1px] text-[11px] leading-none text-black">
        <div className="relative z-10 mb-[-1px] w-[90px] h-[23px] border border-b-0 border-[#919b9c] rounded-t-[3px] bg-[#ece9d8] flex items-center justify-center">
          Осциллограф
        </div>
        {tabs.map(t => (
          <div key={t.label} className={`${t.width} h-[20px] border border-b-0 border-[#919b9c] rounded-t-[3px] bg-[linear-gradient(#ffffff,#ece9d8)] flex items-center justify-center whitespace-nowrap`}>
            {t.label}
          </div>
        ))}
      </div>

      <Toolbar />
      <Scope />
      <ScrollRow />

      <div className="pl-[386px]">
        <div className="relative w-[509px] h-[7px] border border-[#aca899] flex items-center">
          <svg width="507" height="5" viewBox="0 0 507 5">
            <path d="M4 0h8l-4 4z" fill="#2050d0" />
            <path d="M14 2.500h480" stroke="#2050d0" strokeDasharray="1 2" />
            <path d="M495 0h8l-4 4z" fill="#2050d0" />
          </svg>
        </div>
      </div>

      <BottomPanel />
    </div>
  );
}
